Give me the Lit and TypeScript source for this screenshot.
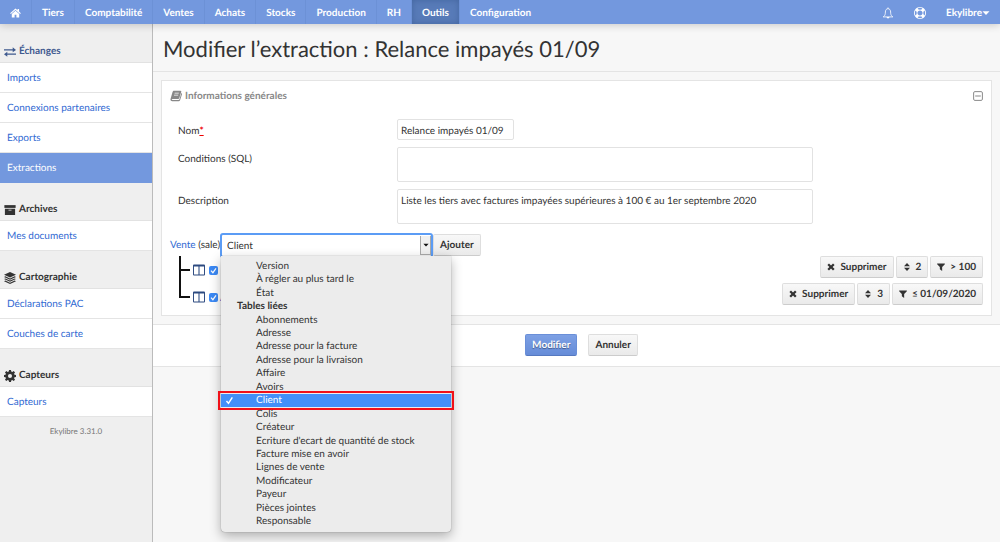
import { LitElement, html, css, svg } from "lit";
import { customElement, state } from "lit/decorators.js";

const NAV = ["Tiers", "Comptabilité", "Ventes", "Achats", "Stocks", "Production", "RH", "Outils", "Configuration"];

const ICONS: Record<string, unknown> = {
  home: svg`<path d="M8 1.600 0.200 8.200l1.100 1.200L8 3.800l6.700 5.600 1.100-1.200-2.600-2.300V2h-2.200v2z"/><path d="M8 4.900 2.600 9.500V14.400h4.100v-4h2.600v4h4.100V9.500z"/>`,
  bell: svg`<path d="M8 .6v1.600M2.600 12.400c1.400-1.400 1.900-2.700 1.900-5.700C4.500 4 6 2.200 8 2.200S11.500 4 11.500 6.700c0 3 .5 4.300 1.900 5.700l1 .8H1.600z" fill="none" stroke="currentColor" stroke-width="1.100"/><path d="M6.100 13.400a1.900 1.900 0 0 0 3.800 0z"/>`,
  ring: svg`<path transform="scale(.00893)" d="M896 0q182 0 348 71t286 191 191 286 71 348-71 348-191 286-286 191-348 71-348-71-286-191-191-286-71-348 71-348 191-286 286-191 348-71zm0 128q-190 0-361 90l194 194q82-28 167-28t167 28l194-194q-171-90-361-90zm-678 1129l194-194q-28-82-28-167t28-167l-194-194q-90 171-90 361t90 361zm678 407q190 0 361-90l-194-194q-82 28-167 28t-167-28l-194 194q171 90 361 90zm0-384q159 0 271.500-112.500t112.500-271.500-112.500-271.500-271.500-112.500-271.500 112.500-112.500 271.500 112.500 271.500 271.500 112.500zm484-217l194 194q90-171 90-361t-90-361l-194 194q28 82 28 167t-28 167z" fill-rule="evenodd"/>`,
  exchange: svg`<path d="M0 4.300h11.600V1.800L16 5.200l-4.400 3.100V6.100H0zM16 9.900H4.400V7.700L0 11.100l4.400 3.200v-2.500H16z"/>`,
  archive: svg`<path d="M.5 1.500h15v3.700H.5z"/><path d="M1.200 6.200h13.600v8.600H1.200zM6 7.500v1.200h4V7.500z" fill-rule="evenodd"/>`,
  layers: svg`<path d="M8 0 16 3.700 8 7.300 0 3.700z"/><path d="M1.800 5.600 8 8.500l6.200-2.900L16 6.500l-8 3.700L0 6.500z"/><path d="M1.800 8.500 8 11.400l6.200-2.900 1.800.9-8 3.700-8-3.700z"/><path d="M1.800 11.400 8 14.200l6.200-2.800 1.800.9L8 16l-8-3.700z"/>`,
  gear: svg`<path fill-rule="evenodd" d="M6.700 0h2.600l.4 2.100 1.400.6L12.900 1.400l1.800 1.800-1.300 1.800.6 1.400 2 .3v2.600l-2 .4-.6 1.400 1.300 1.800-1.800 1.800-1.800-1.300-1.400.6-.4 2H6.700l-.4-2-1.400-.6-1.800 1.300-1.800-1.800 1.300-1.800-.6-1.400-2-.4V6.700l2-.3.6-1.400L1.300 3.200l1.800-1.800 1.800 1.300 1.400-.6zM8 5.300a2.700 2.700 0 1 0 0 5.400 2.700 2.700 0 0 0 0-5.400z"/>`,
  book: svg`<path fill-rule="evenodd" d="M5.200 1h8.600c1 0 1.500.7 1.200 1.600l-2.600 8.200c-.2.800-.8 1.200-1.600 1.200H3.300c-1.200 0-1.600 1 .1 1.200h8c.6 0 1-.3 1.200-.8l2.600-8.300c.9.400 1 1 .7 1.800l-2.500 7.700c-.3.900-1 1.400-1.900 1.400H3C1.300 15 .3 13.500.7 12L3.300 3C3.600 1.800 4.200 1 5.200 1zM6.300 3.800l-.3 1h5.600l.3-1zM5.500 6.300l-.3 1h5.600l.3-1z"/>`,
  minus: svg`<rect x="1" y="1" width="14" height="14" rx="2" fill="none" stroke="currentColor" stroke-width="1.600"/><path d="M3.500 7.200h9v1.600h-9z"/>`,
  columns: svg`<path fill-rule="evenodd" d="M1.200.8h13.600c.7 0 1.200.5 1.200 1.200v12c0 .7-.5 1.200-1.200 1.200H1.200C.5 15.200 0 14.700 0 14V2C0 1.300.5.8 1.200.8zM1.300 3.300v10.600h6V3.300zM8.700 3.300v10.600h6V3.300z"/>`,
  cross: svg`<path d="M4 1 8 4.800 12 1l3.200 3L11.200 8l4 4L12 15 8 11.200 4 15 .8 12l4-4-4-4z"/>`,
  sort: svg`<path d="M8 0l6 6.700H2zM8 16l6-6.700H2z"/>`,
  filter: svg`<path d="M.3 1h15.400v1.600L10.300 8v7.800L5.700 12.600V8L.3 2.600z"/>`,
  caret: svg`<path d="M1 4.500h14L8 12z"/>`,
  check: svg`<path d="M2.600 8.800 6.200 13l6.800-10.600" fill="none" stroke="currentColor" stroke-width="2.600"/>`,
};

const icon = (name: string, cls = "") =>
  html`<svg class="icon ${cls}" viewBox="0 0 16 16" aria-hidden="true">${ICONS[name]}</svg>`;

const SECTIONS = [
  { icon: "exchange", title: "Échanges", active: true, items: ["Imports", "Connexions partenaires", "Exports", "Extractions"] },
  { icon: "archive", title: "Archives", items: ["Mes documents"] },
  { icon: "layers", title: "Cartographie", items: ["Déclarations PAC", "Couches de carte"] },
  { icon: "gear", title: "Capteurs", items: ["Capteurs"] },
];

const FIELDS = ["Version", "À régler au plus tard le", "État"];
const TABLES = [
  "Abonnements", "Adresse", "Adresse pour la facture", "Adresse pour la livraison", "Affaire", "Avoirs",
  "Client", "Colis", "Créateur", "Ecriture d'ecart de quantité de stock", "Facture mise en avoir",
  "Lignes de vente", "Modificateur", "Payeur", "Pièces jointes", "Responsable",
];

const COLUMNS = [
  { id: "amount", label: "", order: "2", filter: "> 100" },
  { id: "due", label: "A", order: "3", filter: "≤ 01/09/2020" },
];

@customElement("app-root")
export class AppRoot extends LitElement {
  @state() private selected = "Client";

  static styles = css`
    :host {
      display: flex;
      flex-direction: column;
      min-height: 100vh;
      background: #f7f7f7;
      color: #333;
      font: 10px/14px Lato, "Open Sans", sans-serif;
      text-rendering: geometricPrecision;
    }
    * { box-sizing: border-box; }
    a { color: #3069d2; text-decoration: none; }
    ul, h1, h2 { margin: 0; padding: 0; list-style: none; }
    button, input, textarea, select { font: inherit; color: inherit; margin: 0; text-rendering: inherit; }
    .icon { width: 12px; height: 12px; flex: none; fill: currentColor; }

    .topbar {
      display: flex;
      height: 24px;
      background: #7398de;
      box-shadow: 0 1px 8px rgba(0, 0, 0, 0.2);
      z-index: 1;
    }
    .topbar a {
      display: flex;
      align-items: center;
      padding: 2px 10px 0;
      color: #fff;
      font-weight: 700;
      border-right: 1px solid #6c91d6;
    }
    .topbar .home { width: 11px; }
    .topbar a.plain { border-right: 0; }
    .topbar a.current { background: #587bb8; box-shadow: inset 0 0 6px #43659f; }
    .tools { display: flex; margin-left: auto; }
    .tools .caret { width: 8px; height: 8px; }

    .body { display: flex; flex: 1; }
    .sidebar { flex: none; width: 153px; background: #efefef; border-right: 1px solid #bbb; }
    .section h2 {
      display: flex;
      align-items: flex-end;
      gap: 3px;
      height: 38px;
      padding: 0 4px 4px;
      border-bottom: 1px solid #e2e2e2;
      font-size: 10px;
      line-height: 14px;
    }
    .section:first-child h2 { height: 39px; }
    .section h2.active { color: #3f5a8f; }
    .section li a {
      display: flex;
      align-items: center;
      height: 30px;
      padding: 0 7px;
      background: #fff;
      border-bottom: 1px solid #e4e4e4;
    }
    .section li a.current { background: #7398de; color: #fff; border-color: #7398de; }
    .version { margin: 0; padding-top: 7px; text-align: center; font-size: 8px; color: #777; }

    .main { flex: 1; min-width: 0; }
    h1 {
      padding: 10px 10px 7px;
      border-bottom: 1px solid #e4e4e4;
      font-size: 22px;
      font-weight: 400;
      line-height: 30px;
    }
    .card { margin: 8px; padding: 8px 8px 5px; background: #fff; border: 1px solid #e4e4e4; }
    .card-head { display: flex; align-items: center; gap: 3px; color: #888; }
    .card-head h2 { flex: 1; font-size: 10px; line-height: 14px; }
    .card-head button { display: flex; padding: 0; border: 0; background: none; color: #888; }
    .card-head .minus { width: 10px; height: 10px; }

    .fields { display: grid; gap: 7px; padding: 16px 8px 10px; }
    .field { display: grid; grid-template-columns: 219px 1fr; align-items: start; }
    .field label { padding-top: 5px; }
    .field abbr { color: #e00; font-weight: 700; text-decoration: underline; }
    .field input, .field textarea {
      display: block;
      border: 1px solid #e2e2e2;
      border-radius: 2px;
      background: #fff;
      padding: 4px 3px 2px;
      outline: 0;
    }
    .field input { width: 117px; height: 21px; }
    .field textarea { width: 100%; max-width: 416px; height: 35px; resize: none; }

    .adder { display: flex; align-items: center; gap: 2px; position: relative; }
    .picker { position: relative; }
    .picker select {
      display: block;
      width: 209px;
      height: 21px;
      padding: 1px 5px 0;
      appearance: none;
      border: 0;
      border-radius: 1px;
      outline: 2px solid #5b9cf5;
      background: #fff;
    }
    .arrow {
      position: absolute;
      right: 0;
      top: 1px;
      bottom: 1px;
      display: flex;
      align-items: center;
      justify-content: center;
      width: 11px;
      border: 1px solid #aaa;
      border-width: 0 1px 1px;
      background: #f0f0f0;
      color: #111;
      pointer-events: none;
    }
    .arrow .icon { width: 6px; height: 6px; }
    .menu {
      position: absolute;
      top: 21px;
      left: -1px;
      z-index: 2;
      display: grid;
      grid-auto-rows: 1fr;
      align-items: center;
      width: 230px;
      height: 276px;
      padding: 4px 0 3px;
      border-radius: 0 0 4px 4px;
      background: #ececec;
      box-shadow: 0 0 1px rgba(0, 0, 0, 0.5), 0 4px 12px rgba(0, 0, 0, 0.3);
    }
    .menu li { display: flex; align-items: center; padding-left: 35px; line-height: 13px; }
    .menu .group { padding-left: 16px; font-weight: 700; }
    .menu .chosen {
      padding-left: 4px;
      gap: 22px;
      background: #438ff8;
      color: #fff;
      outline: 2px solid #f01018;
      outline-offset: 1px;
    }
    .menu .chosen .icon { width: 9px; height: 9px; }

    .btn {
      display: inline-flex;
      align-items: center;
      gap: 5px;
      height: 22px;
      padding: 0 6px;
      border: 1px solid #dedede;
      border-bottom-color: #ccc;
      border-radius: 2px;
      background: linear-gradient(#f8f8f8, #eaeaea);
      font-weight: 700;
      white-space: nowrap;
    }
    .btn .icon { width: 8px; height: 8px; }
    .btn.primary {
      border-color: #6a8fd8;
      border-bottom-color: #5679c0;
      background: linear-gradient(#7da0e4, #668cd8);
      color: #fff;
      text-shadow: 0 1px 1px rgba(0, 0, 0, 0.4);
    }
    .tree { padding-left: 9px; }
    .tree li { display: flex; align-items: center; height: 27px; }
    .branch { align-self: stretch; width: 11px; height: 27px; margin-right: 3px; fill: none; stroke: #111; stroke-width: 2; }
    .tree .columns { color: #2d4a80; }
    .tree label { display: flex; align-items: center; gap: 2px; padding: 2px 0 0 4px; color: #3069d2; }
    .tree input {
      appearance: none;
      width: 9px;
      height: 9px;
      border-radius: 2px;
      background: #3b89f5 url('data:image/svg+xml,<svg xmlns="http://www.w3.org/2000/svg" viewBox="0 0 9 9"><path d="M2 4.700 3.900 6.700 7 2.300" fill="none" stroke="white" stroke-width="1.200"/></svg>');
    }
    .row-actions { display: flex; gap: 2px; margin-left: auto; align-self: flex-start; }
    .actions {
      display: flex;
      justify-content: center;
      gap: 11px;
      padding: 9px 0 10px 10px;
      background: #fff;
      border: solid #e4e4e4;
      border-width: 1px 0;
    }
  `;

  private option(name: string) {
    const chosen = name === this.selected;
    return html`<li role="option" aria-selected=${chosen} class=${chosen ? "chosen" : ""}
      @click=${() => (this.selected = name)}>${chosen ? icon("check") : ""}${name}</li>`;
  }

  render() {
    return html`
      <nav class="topbar">
        <a href="#" aria-label="Accueil">${icon("home", "home")}</a>
        ${NAV.map((n) => html`<a href="#" class=${n === "Outils" ? "current" : n === "Configuration" ? "plain" : ""}>${n}</a>`)}
        <div class="tools">
          <a href="#" class="plain" aria-label="Notifications">${icon("bell")}</a>
          <a href="#" class="plain" aria-label="Aide">${icon("ring")}</a>
          <a href="#" class="plain">Ekylibre${icon("caret", "caret")}</a>
        </div>
      </nav>
      <div class="body">
        <aside class="sidebar">
          ${SECTIONS.map((s) => html`
            <section class="section">
              <h2 class=${s.active ? "active" : ""}>${icon(s.icon)}${s.title}</h2>
              <ul>${s.items.map((i) => html`<li><a href="#" class=${i === "Extractions" ? "current" : ""}>${i}</a></li>`)}</ul>
            </section>`)}
          <p class="version">Ekylibre 3.31.0</p>
        </aside>
        <main class="main">
          <h1>Modifier l’extraction : Relance impayés 01/09</h1>
          <section class="card">
            <div class="card-head">
              ${icon("book")}
              <h2>Informations générales</h2>
              <button aria-label="Réduire">${icon("minus", "minus")}</button>
            </div>
            <div class="fields">
              <div class="field"><label for="name">Nom<abbr title="obligatoire">*</abbr></label><input id="name" value="Relance impayés 01/09"></div>
              <div class="field"><label for="sql">Conditions (SQL)</label><textarea id="sql"></textarea></div>
              <div class="field"><label for="desc">Description</label><textarea id="desc" .value=${"Liste les tiers avec factures impayées supérieures à 100 € au 1er septembre 2020"}></textarea></div>
            </div>
            <div class="adder">
              <label for="column"><a href="#">Vente</a> (sale)</label>
              <div class="picker">
                <select id="column" .value=${this.selected}>
                  ${FIELDS.map((o) => html`<option>${o}</option>`)}
                  <optgroup label="Tables liées">${TABLES.map((o) => html`<option ?selected=${o === this.selected}>${o}</option>`)}</optgroup>
                </select>
                <span class="arrow">${icon("caret")}</span>
                <ul class="menu" role="listbox" aria-label="Colonnes">
                  ${FIELDS.map((o) => this.option(o))}
                  <li class="group" role="presentation">Tables liées</li>
                  ${TABLES.map((o) => this.option(o))}
                </ul>
              </div>
              <button class="btn">Ajouter</button>
            </div>
            <ul class="tree">
              ${COLUMNS.map((c, i) => html`
                <li>
                  <svg class="branch" viewBox="0 0 11 27" aria-hidden="true"><path d=${i < COLUMNS.length - 1 ? "M1 0V27M1 14H11" : "M1 0V14H11"} /></svg>
                  ${icon("columns", "columns")}
                  <label for=${c.id}><input type="checkbox" id=${c.id} aria-label="Colonne" checked>${c.label}</label>
                  <div class="row-actions">
                    <button class="btn">${icon("cross")}Supprimer</button>
                    <button class="btn">${icon("sort")}${c.order}</button>
                    <button class="btn">${icon("filter")}${c.filter}</button>
                  </div>
                </li>`)}
            </ul>
          </section>
          <div class="actions">
            <button class="btn primary">Modifier</button>
            <button class="btn">Annuler</button>
          </div>
        </main>
      </div>
    `;
  }
}
